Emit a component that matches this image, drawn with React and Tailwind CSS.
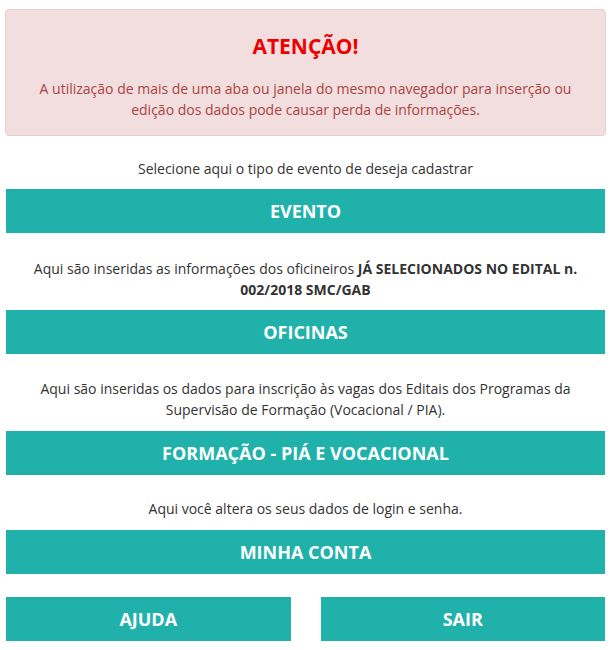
import React from "react";

const Btn = ({ children, className = "" }) => (
  <a
    href="#"
    className={
      "flex h-[44px] items-center justify-center bg-[#20b2aa] text-[18px] font-bold text-white " +
      className
    }
  >
    {children}
  </a>
);

const App = () => {
  return (
    <div className="bg-white pb-[8px] font-['Open_Sans',sans-serif] text-[14px] leading-[21px] text-[#333]">
      <div className="mx-[5px] mt-[9px] rounded-[4px] border border-[#ebccd1] bg-[#f2dede] px-[15px] pb-[15px] pt-[23px] text-center">
        <h4 className="text-[21px] font-bold leading-[26px] text-[#ee0000]">ATENÇÃO!</h4>
        <p className="mt-[19px] text-[#a94442]">
          A utilização de mais de uma aba ou janela do mesmo navegador para inserção ou
          <br />
          edição dos dados pode causar perda de informações.
        </p>
      </div>

      <div className="mx-[6px] flex flex-col">
        <p className="mt-[22px] text-center">Selecione aqui o tipo de evento de deseja cadastrar</p>
        <Btn className="mt-[10px]">EVENTO</Btn>

        <p className="mt-[25px] px-[20px] text-center">
          Aqui são inseridas as informações dos oficineiros{" "}
          <b>
            JÁ SELECIONADOS NO EDITAL n.
            <br />
            002/2018 SMC/GAB
          </b>
        </p>
        <Btn className="mt-[10px]">OFICINAS</Btn>

        <p className="mt-[24px] text-center">
          Aqui são inseridas os dados para inscrição às vagas dos Editais dos Programas da
          <br />
          Supervisão de Formação (Vocacional / PIA).
        </p>
        <Btn className="mt-[11px]">FORMAÇÃO - PIÁ E VOCACIONAL</Btn>

        <p className="mt-[23px] text-center">Aqui você altera os seus dados de login e senha.</p>
        <Btn className="mt-[11px]">MINHA CONTA</Btn>

        <div className="mt-[23px] grid grid-cols-2 gap-[30px]">
          <Btn>AJUDA</Btn>
          <Btn>SAIR</Btn>
        </div>
      </div>
    </div>
  );
};

export default App;
